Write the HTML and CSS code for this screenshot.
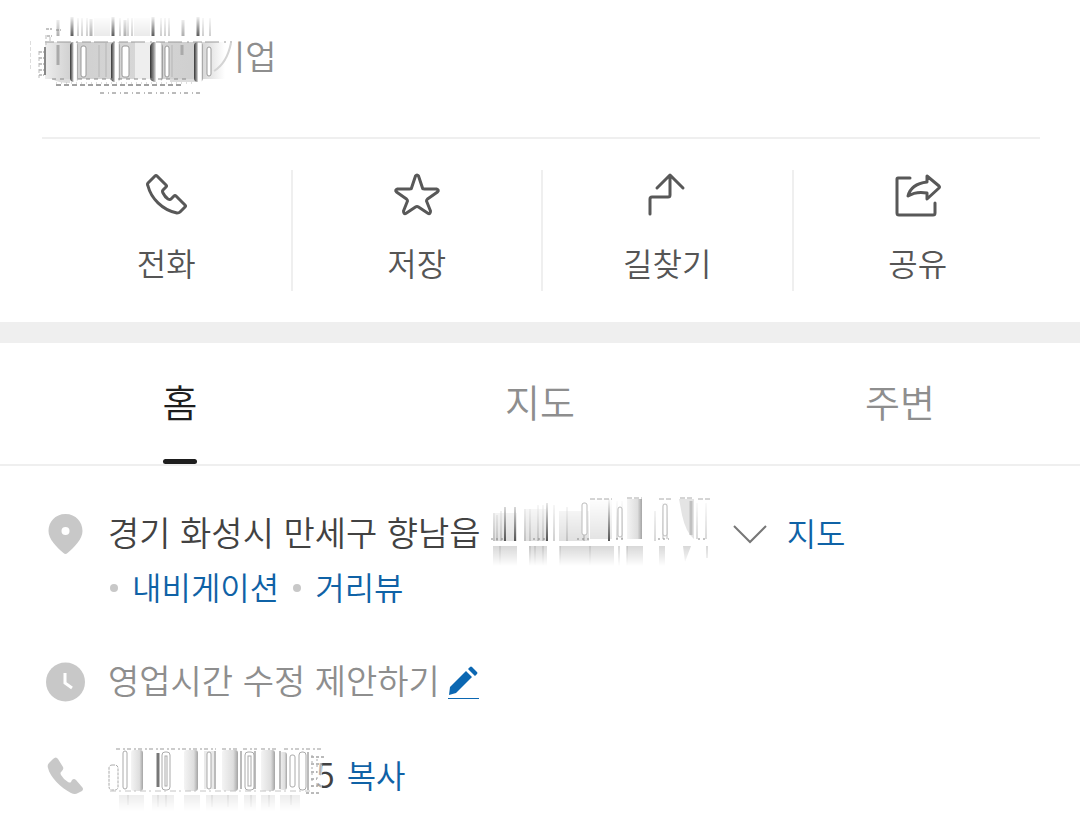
FILE: index.html
```html
<!DOCTYPE html>
<html lang="ko">
<head>
  <meta charset="UTF-8">
  <title>업체 정보</title>
  <meta name="viewport" content="width=device-width, initial-scale=1.0">
  <link rel="stylesheet" href="styles.css">
</head>

<body>

<!-- Shared gradients for the blurred-out text -->
<svg class="defs" width="0" height="0" aria-hidden="true">
  <defs>
    <linearGradient id="fadeUp" x1="0" y1="0" x2="0" y2="1">
      <stop offset="0" stop-color="#000"/>
      <stop offset="1" stop-color="#fff"/>
    </linearGradient>
    <linearGradient id="fadeDown" x1="0" y1="0" x2="0" y2="1">
      <stop offset="0" stop-color="#aaa"/>
      <stop offset="1" stop-color="#000"/>
    </linearGradient>
    <linearGradient id="tube" x1="0" y1="0" x2="1" y2="0">
      <stop offset="0" stop-color="#333"/>
      <stop offset="0.3" stop-color="#999"/>
      <stop offset="0.5" stop-color="#fff"/>
      <stop offset="0.8" stop-color="#fff"/>
      <stop offset="1" stop-color="#888"/>
    </linearGradient>
    <linearGradient id="soft" x1="0" y1="0" x2="1" y2="0">
      <stop offset="0" stop-color="#f4f4f4"/>
      <stop offset="0.7" stop-color="#dedede"/>
      <stop offset="1" stop-color="#a4a4a4"/>
    </linearGradient>
    <linearGradient id="block" x1="0" y1="0" x2="1" y2="0">
      <stop offset="0" stop-color="#ededed"/>
      <stop offset="0.15" stop-color="#cfcfcf"/>
      <stop offset="0.5" stop-color="#d6d6d6"/>
      <stop offset="0.85" stop-color="#cfcfcf"/>
      <stop offset="1" stop-color="#fff"/>
    </linearGradient>
    <linearGradient id="toWhite" x1="0" y1="0" x2="1" y2="0">
      <stop offset="0" stop-color="#fff" stop-opacity="0"/>
      <stop offset="1" stop-color="#fff" stop-opacity="0.7"/>
    </linearGradient>
  </defs>
</svg>

<header>
  <h1>
    기업
    <svg class="smudge" width="210" height="84" viewBox="0 0 210 84" aria-hidden="true">
      <mask id="m1"><rect y="0" width="210" height="22" fill="url(#fadeUp)"/></mask>
      <rect x="180" y="14" width="26" height="58" fill="#fff"/>
      <g mask="url(#m1)">
        <path d="M28 5v16M61 4v17M95 5v16M153 5v16" stroke="#aaa" stroke-width="3"/>
        <path d="M42 2v19M83 2v19M123 2v19M168 2v19" stroke="#555" stroke-width="3"/>
        <path d="M48 3v18M52 3v18M57 3v18M90 3v18M98 3v18M102 3v18M131 3v18M135 3v18M139 3v18M173 3v18M180 3v18" stroke="#999"/>
        <path d="M64 3h16v18H64zM104 3h16v18h-16z" fill="#eaeaea"/>
      </g>
      <rect x="15" y="27" width="180" height="37" fill="url(#block)"/>
      <path d="M22 64h18v4q-12 0-18-4zM140 64h26v3h-26z" fill="#ddd"/>
      <rect x="105" y="27" width="17" height="37" fill="#eee"/>
      <path d="M28 30v20M152 30v10" stroke="#aaa" stroke-width="3"/>
      <path d="M69 30v32M76 28v34M142 30v32" stroke="#c4c4c4" stroke-width="2"/>
      <path d="M15 32v28" stroke="#888" stroke-width="2"/>
      <g fill="url(#tube)">
        <rect x="40" y="27" width="8" height="40" rx="4"/>
        <rect x="81" y="27" width="9" height="40" rx="4"/>
        <rect x="120" y="27" width="13" height="40" rx="5"/>
        <rect x="164" y="27" width="9" height="40" rx="4"/>
      </g>
      <g fill="#fff" stroke="#999">
        <rect x="51" y="31" width="5" height="31" rx="2"/>
        <rect x="92" y="31" width="7" height="31" rx="2"/>
        <rect x="135" y="31" width="4" height="31" rx="2"/>
        <rect x="177" y="32" width="4" height="29" rx="2"/>
      </g>
      <path d="M15 27h187" stroke="#999" stroke-dasharray="9 3 14 5 2 4"/>
      <path d="M201 28q-4 20-17 28" fill="none" stroke="#d4d4d4" stroke-width="2"/>
      <g fill="none" stroke="#888">
        <path d="M9 37h5M9 43h5M9 49h5M9 55h5M9 60h5M16 14h6M26 15h5M17 21h5" stroke-dasharray="3 1"/>
        <path d="M9 36v27M16 20v12M20 22v5M0 26v30" stroke="#bbb" stroke-dasharray="4 2"/>
        <path d="M22 64h15M48 64h110" stroke-dasharray="4 4"/>
        <path d="M26 70h128" stroke="#444" stroke-dasharray="5 3"/>
        <path d="M26 68h140" stroke="#bbb" stroke-dasharray="1 4"/>
        <path d="M70 78h102" stroke="#777" stroke-dasharray="4 4 1 3"/>
      </g>
    </svg>
  </h1>
</header>

<nav class="actions">
  <button type="button">
    <svg width="48" height="48" viewBox="0 0 48 48" aria-hidden="true">
      <path d="M6 13L13 6q1-1 2 0L24 15q1 1 0 2l-3 3q-1 1 0 3q2 4 5 6q2 1 3 0l3-3q1-1 2 0L43 35q1 1 0 2L38 42q-1 1-3 1C20 40 9 28 6 16q-1-2 0-3z"/>
    </svg>
    <span>전화</span>
  </button>
  <button type="button">
    <svg width="48" height="48" viewBox="0 0 48 48" aria-hidden="true">
      <path d="M22.500 6q1.500-2 3 0l4 12q0 1 2 1l12 0q3 1 1 3l-10 7q-1 1-1 2l4 10q0 4-3 2l-9-6q-1.500-1-3 0l-9 6q-3 2-3-2l4-10q0-1-1-2L3.500 22q-2-2 1-3l12 0q2 0 2-1z"/>
    </svg>
    <span>저장</span>
  </button>
  <button type="button">
    <svg width="48" height="48" viewBox="0 0 48 48" aria-hidden="true">
      <path d="M7 44V29q0-2 2-2H25q2 0 2-2V6M14 18L27 5l13 13"/>
    </svg>
    <span>길찾기</span>
  </button>
  <button type="button">
    <svg width="48" height="48" viewBox="0 0 48 48" aria-hidden="true">
      <path d="M16 8H4q-1 0-1 1V43q0 2 2 2H39q2 0 2-2V33"/>
      <path d="M33 6l12 10q1 1 0 2L33 29V23q-11-2-19 3q3-12 19-14z"/>
    </svg>
    <span>공유</span>
  </button>
</nav>

<nav class="tabs">
  <a href="#home" class="active">홈</a>
  <a href="#map">지도</a>
  <a href="#around">주변</a>
</nav>

<main id="home">
  <div class="row">
    <svg class="row-icon" width="42" height="54" viewBox="0 0 42 54" aria-hidden="true">
      <path d="M21.500 7C11 7 4.500 15 4.500 24c0 8 8 16 15 22q2 2 4 0c7-6 15-14 15-22C38.500 15 32 7 21.500 7z"/>
      <circle cx="21.500" cy="24" r="4" fill="#fff"/>
    </svg>
    <div class="info">
      <div class="line">
        <span>경기 화성시 만세구 향남읍</span>
        <svg class="smudge-inline address" width="228" height="74" viewBox="0 0 228 74" aria-hidden="true">
          <mask id="m2"><rect width="228" height="48" fill="url(#fadeUp)"/></mask>
          <mask id="m3"><rect y="49" width="228" height="20" fill="url(#fadeDown)"/></mask>
          <g mask="url(#m2)">
            <path d="M4 16h24v28H4zM35 12h22v32H35zM70 14h30v30H70z" fill="#ddd"/>
            <path d="M101 2h22v40h-22z" fill="#e0e0e0"/>
            <path d="M16 10v34M26 10v34M58 6v38M120 2v42" stroke="#444" stroke-width="2"/>
            <path d="M5 16v28M8 18v26M12 14v30M36 12v32M41 12v32M49 8v36M54 8v36M65 8v36M78 10v34M95 6v38" stroke="#999"/>
            <path d="M128 4v38M133 4v38M166 14v30M174 6v36M178 6v36M208 6v36M217 6v36" stroke="#aaa"/>
          </g>
          <path d="M138 2h15v40h-15z" fill="url(#soft)"/>
          <path d="M190 2h15v40q-8-6-12-24z" fill="#e4e4e4"/>
          <path d="M202 4v34" stroke="#c0c0c0" stroke-width="3"/>
          <path d="M101 2h22M138 1h15M170 2h14M191 1h14M209 2h12" stroke="#aaa" stroke-dasharray="5 2"/>
          <path d="M2 42h14M44 42h14M88 42h12M127 42h8M169 42h11M209 42h10" stroke="#888" stroke-dasharray="2 3"/>
          <g fill="#fff" stroke="#bbb">
            <rect x="93" y="6" width="5" height="32" rx="2"/>
            <rect x="129" y="10" width="4" height="30" rx="2"/>
            <rect x="174" y="7" width="4" height="32" rx="2"/>
          </g>
          <g mask="url(#m3)">
            <path d="M4 49h24v24H4zM40 49h18v24H40zM71 49h54v24H71zM138 49h16v24h-16zM170 49h6v24h-6zM194 49l8 0l-6 16z" fill="#c4c4c4"/>
            <path d="M11 49v24M41 49v24M46 49v24M54 49v24M71 49v24M101 49v24M130 49v24M138 49v24M218 49v12" stroke="#888"/>
          </g>
        </svg>
        <button type="button" class="more" aria-label="주소 더보기">
          <svg width="34" height="20" viewBox="0 0 34 20" aria-hidden="true">
            <path d="M1 2l16 16L33 2"/>
          </svg>
        </button>
        <a href="#map">지도</a>
      </div>
      <div class="line links">
        <a href="#navi">내비게이션</a>
        <a href="#street">거리뷰</a>
      </div>
    </div>
  </div>

  <div class="row">
    <svg class="row-icon" width="42" height="54" viewBox="0 0 42 54" aria-hidden="true">
      <circle cx="21.500" cy="27" r="19.500"/>
      <path d="M21 18v10l7 5" fill="none" stroke="#fff" stroke-width="3"/>
    </svg>
    <div class="info line muted">
      <span>영업시간 수정 제안하기</span>
      <button type="button" class="edit" aria-label="수정">
        <svg width="32" height="36" viewBox="0 0 32 36" aria-hidden="true">
          <path d="M1 31l1-8L18 7l6 6L8 29zM20 5l2-2q1-1 2 0l5 5q1 1 0 2l-2 2z" fill="#0b67b2"/>
          <path d="M0 34.500h31" stroke="#0b67b2"/>
        </svg>
      </button>
    </div>
  </div>

  <div class="row">
    <svg class="row-icon" width="42" height="54" viewBox="0 0 42 54" aria-hidden="true">
      <path d="M5 14l4-4q3-3 5 0l5 8q1 2-1 4l-1 1q-1 1 0 3q3 5 7 7q2 1 3 0l1-2q2-2 4 0l6 7q2 2 0 4l-4 2q-3 2-7 0C17 39 6 28 4 19q-1-3 1-5z"/>
    </svg>
    <div class="info line phone">
      <span>5</span>
      <svg class="smudge" width="225" height="66" viewBox="0 0 225 66" aria-hidden="true">
        <mask id="m4"><rect y="48" width="225" height="16" fill="url(#fadeDown)"/></mask>
        <rect x="204" y="6" width="12" height="42" fill="url(#toWhite)"/>
        <g fill="url(#soft)">
          <rect x="25" y="3" width="12" height="41" rx="3"/>
          <rect x="78" y="3" width="14" height="41" rx="3"/>
          <rect x="116" y="3" width="16" height="41" rx="3"/>
          <rect x="155" y="3" width="14" height="41" rx="3"/>
          <rect x="173" y="5" width="8" height="38" rx="3"/>
        </g>
        <path d="M98 4h10v38H98z" fill="#eaeaea"/>
        <path d="M52 6v34" stroke="#777" stroke-width="3"/>
        <path d="M109 4v38M135 4v38M149 4v38M174 4v38M202 5v38" stroke="#bbb" stroke-width="2"/>
        <g fill="#fff" stroke="#aaa">
          <rect x="3" y="18" width="9" height="25" rx="3" stroke-dasharray="3 1"/>
          <rect x="17" y="4" width="4" height="38" rx="2"/>
          <rect x="56" y="5" width="8" height="38" rx="3"/>
          <rect x="59" y="9" width="2" height="30"/>
          <rect x="101" y="5" width="4" height="37" rx="2"/>
          <rect x="139" y="5" width="9" height="38" rx="3"/>
          <rect x="142" y="9" width="3" height="30"/>
          <rect x="184" y="8" width="5" height="32" rx="2"/>
          <rect x="193" y="5" width="7" height="38" rx="3"/>
        </g>
        <path d="M10 2h100M116 2h15M137 2h14M155 2h15M178 2h40" stroke="#999" stroke-dasharray="4 3 2 2"/>
        <path d="M4 44h200" stroke="#c4c4c4" stroke-dasharray="6 3 2 4"/>
        <path d="M205 10h14M205 17h12M205 25h6M205 32h6M205 39h7M200 46h14" stroke="#777" stroke-dasharray="3 2"/>
        <path d="M206 8v34M211 12v30" stroke="#aaa" stroke-dasharray="2 4"/>
        <g mask="url(#m4)">
          <path d="M13 48h25v18H13zM46 48h22v18H46zM78 48h16v18H78zM100 48h32v18h-32zM138 48h12v18h-12zM155 48h14v18h-14zM174 48h20v18h-20z" fill="#e4e4e4"/>
          <path d="M22 48v10M52 48v12M60 48v12M106 48v12M122 48v12M145 48v12M163 48v12M185 48v10" stroke="#ccc" stroke-width="2"/>
        </g>
      </svg>
      <button type="button" class="copy">복사</button>
    </div>
  </div>
</main>

</body>
</html>
```
FILE: styles.css
```css
* {margin:0;padding:0;box-sizing:border-box}
body {
  background:#fff;
  color:#424242;
  font-family:'Noto Sans CJK KR', sans-serif;
  font-weight:350;
}
button {
  background:none;
  border:none;
  color:inherit;
  font:inherit;
  cursor:pointer;
}
a {text-decoration:none;color:inherit;}
svg {display:block;flex:none;}
.defs {position:absolute;}

header {
  margin:0 40px 0 42px;
  padding:28px 0 53px;
  border-bottom:2px solid #efefef;
}
header h1 {
  position:relative;
  padding-left:172px;
  font-size:34px;
  font-weight:350;
  line-height:56px;
  color:#8e8e8e;
}
.smudge {position:absolute;}
header .smudge {left:-12px;top:-13px;}

.actions {
  display:flex;
  margin:0 38px 0 42px;
  padding:31px 0;
}
.actions button {
  flex:1;
  display:flex;
  flex-direction:column;
  align-items:center;
  gap:20px;
  height:121px;
  font-size:32px;
  line-height:48px;
  color:#555;
}
.actions button + button {border-left:2px solid #efefef;}
.actions svg {
  fill:none;
  stroke:#585858;
  stroke-width:3;
  stroke-linecap:round;
  stroke-linejoin:round;
}

.tabs {
  display:flex;
  border-top:21px solid #efefef;
  border-bottom:2px solid #efefef;
}
.tabs a {
  flex:1;
  display:flex;
  flex-direction:column;
  align-items:center;
  height:121px;
  padding-top:28px;
  font-size:38px;
  line-height:60px;
  color:#8e8e8e;
}
.tabs .active {color:#1e1e1e;}
.tabs .active::after {
  content:'';
  width:34px;
  height:5px;
  margin-top:auto;
  border-radius:3px;
  background:#1e1e1e;
}

main {
  display:flex;
  flex-direction:column;
  gap:40px;
  padding:41px 44px 28px;
}
.row {display:flex;gap:22px;}
.row-icon {fill:#c8c8c8;}
.info {flex:1;}
.line {
  display:flex;
  align-items:center;
  height:54px;
  font-size:34px;
  line-height:50px;
}
.line > span, .line > a, .copy {padding-bottom:4px;}
.line a, .copy {color:#0f62a6;font-size:32px;}
.muted {color:#8e8e8e;}
.smudge-inline {margin:-10px 0;}
.address {margin-left:8px;}
.more {margin:0 20px 0 16px;}
.more svg {fill:none;stroke:#777;stroke-width:2;}

.links a {display:flex;align-items:center;}
.links a::before {
  content:'';
  width:8px;
  height:8px;
  margin:4px 14px 0 2px;
  border-radius:50%;
  background:#c8c8c8;
}
.links a + a::before {margin-left:14px;}

.edit {margin-left:8px;}
.phone {position:relative;padding-left:208px;}
.phone .smudge {left:-2px;top:-2px;}
.copy {margin-left:12px;}
```
